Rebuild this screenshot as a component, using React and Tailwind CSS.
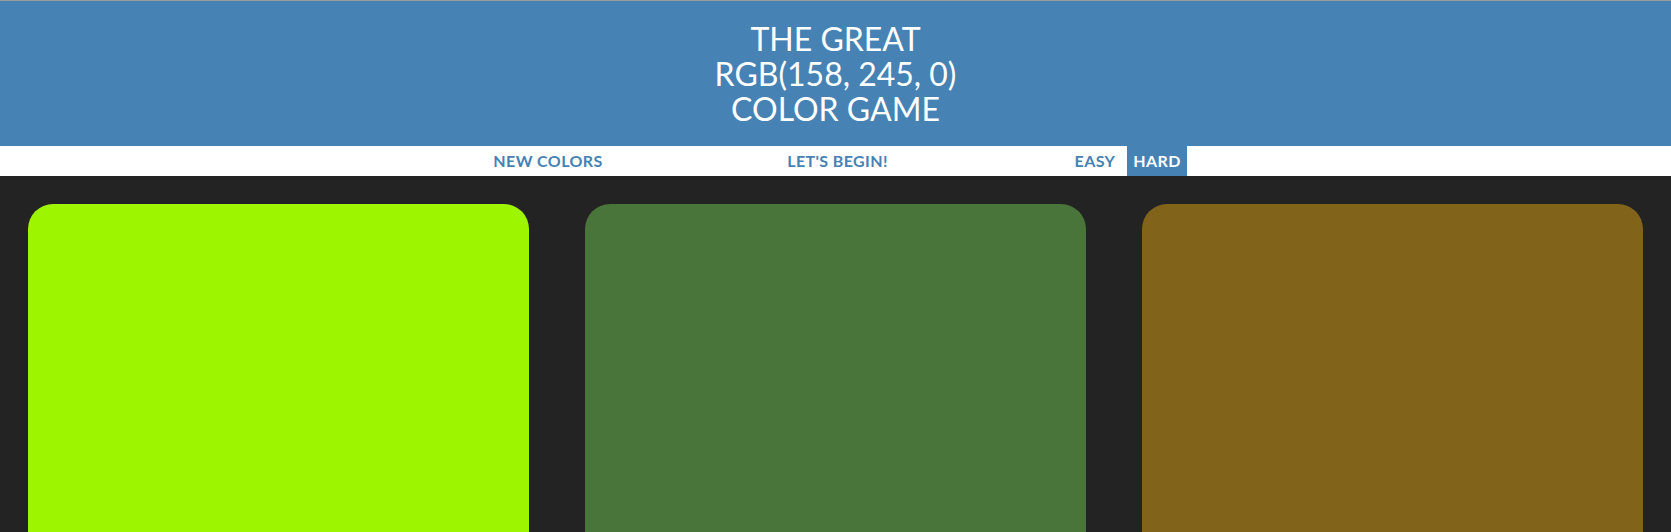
import { useState } from 'react';

const squares = ['#9ef500', '#49753a', '#81631a'];

export default function App() {
  const [mode, setMode] = useState('hard');

  return (
    <div className="h-screen overflow-hidden bg-[#232323] border-t border-[#9b9b9b]" style={{ fontFamily: 'Lato, "Open Sans", sans-serif' }}>
      {/* Title */}
      <h1 className="bg-[#4682b4] text-white text-center uppercase font-normal text-[32px] leading-[35px] py-[20px]">
        The Great
        <br />
        <span>RGB(158, 245, 0)</span>
        <br />
        Color Game
      </h1>

      {/* Stripe */}
      <div className="bg-white h-[30px] flex justify-center text-[#4682b4] text-[16px] font-bold uppercase tracking-[0.4px]">
        <button className="w-[128px] h-full uppercase font-bold">New Colors</button>
        <span className="w-[451px] h-full flex items-center justify-center">Let's Begin!</span>
        <button
          onClick={() => setMode('easy')}
          className={`w-[64px] h-full uppercase font-bold ${mode === 'easy' ? 'bg-[#4682b4] text-white' : ''}`}
        >
          Easy
        </button>
        <button
          onClick={() => setMode('hard')}
          className={`w-[60px] h-full uppercase font-bold ${mode === 'hard' ? 'bg-[#4682b4] text-white' : ''}`}
        >
          Hard
        </button>
      </div>

      {/* Squares */}
      <div className="flex gap-[56px] px-[28px] pt-[28px]">
        {squares.map((c) => (
          <div key={c} className="w-[501px] h-[501px] shrink-0 rounded-[25px]" style={{ backgroundColor: c }} />
        ))}
      </div>
    </div>
  );
}
